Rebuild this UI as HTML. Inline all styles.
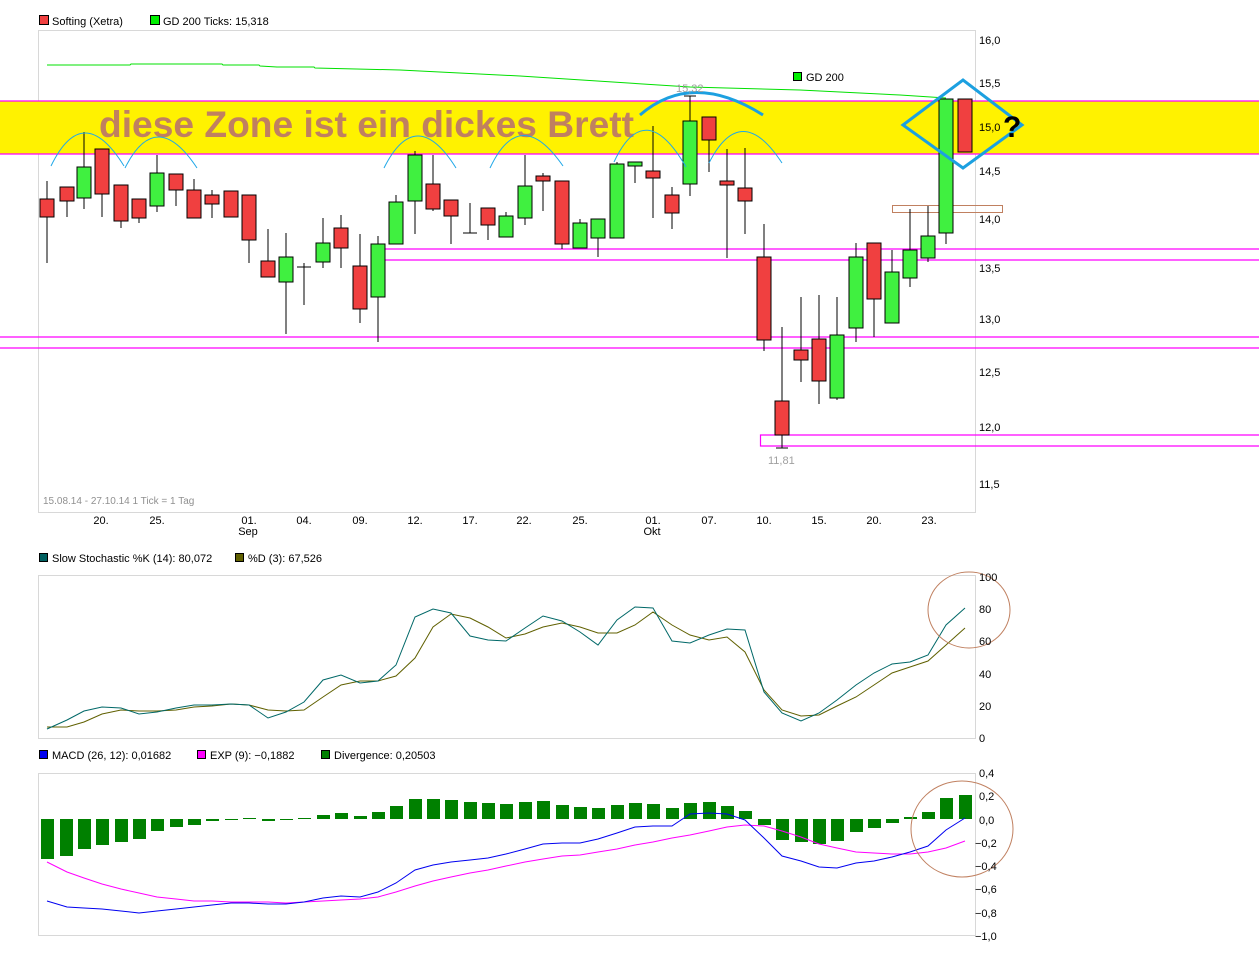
<!DOCTYPE html>
<html><head><meta charset="utf-8"><style>
html,body{margin:0;padding:0;background:#fff;}
svg{display:block;font-family:"Liberation Sans",Arial,sans-serif;}
</style></head><body>
<svg width="1259" height="979" viewBox="0 0 1259 979" xmlns="http://www.w3.org/2000/svg">
<!-- legend top -->
<rect x="39.5" y="15.5" width="9" height="9" fill="#f04040" stroke="#000"/>
<text x="52" y="25" font-size="11">Softing (Xetra)</text>
<rect x="150.5" y="15.5" width="9" height="9" fill="#00f000" stroke="#000"/>
<text x="163" y="25" font-size="11">GD 200 Ticks: 15,318</text>

<!-- main frame -->
<rect x="38.5" y="30.5" width="937" height="482" fill="#fff" stroke="#d8d8d8"/>
<rect x="0" y="101" width="1259" height="53" fill="#fff200"/>
<g stroke="#ff00ff" stroke-width="1.2" fill="none">
<line x1="0" y1="101" x2="1259" y2="101"/>
<line x1="0" y1="154" x2="1259" y2="154"/>
<line x1="0" y1="337" x2="1259" y2="337"/>
<line x1="0" y1="348" x2="1259" y2="348"/>
<path d="M1259 249 H375.5 V260 H1259"/>
<path d="M1259 435 H760.5 V446 H1259"/>
</g>
<rect x="892.5" y="205.5" width="110" height="7" fill="none" stroke="#c08060"/>

<!-- GD200 line -->
<polyline points="47,65 130,65 131,64 222,64 223,65 259,65 260,66 277,67 314,67 315,68 400,70 520,76 690,87 800,90 900,95 946,98" fill="none" stroke="#00e000" stroke-width="1"/>
<rect x="793.5" y="72.5" width="8" height="8" fill="#00f000" stroke="#000"/>
<text x="806" y="81" font-size="11">GD 200</text>

<!-- big text -->
<text x="99" y="137" font-size="37" font-weight="bold" fill="#c08060" textLength="535" lengthAdjust="spacingAndGlyphs">diese Zone ist ein dickes Brett</text>

<!-- candles -->
<g stroke="#000" stroke-width="1">
<line x1="47" y1="181" x2="47" y2="263"/><rect x="40" y="199" width="14" height="18" fill="#f04040"/>
<line x1="67" y1="187" x2="67" y2="217"/><rect x="60" y="187" width="14" height="14" fill="#f04040"/>
<line x1="84" y1="132" x2="84" y2="209"/><rect x="77" y="167" width="14" height="31" fill="#40f040"/>
<line x1="102" y1="149" x2="102" y2="217"/><rect x="95" y="149" width="14" height="45" fill="#f04040"/>
<line x1="121" y1="185" x2="121" y2="228"/><rect x="114" y="185" width="14" height="36" fill="#f04040"/>
<line x1="139" y1="199" x2="139" y2="223"/><rect x="132" y="199" width="14" height="19" fill="#f04040"/>
<line x1="157" y1="155" x2="157" y2="212"/><rect x="150" y="173" width="14" height="33" fill="#40f040"/>
<line x1="176" y1="174" x2="176" y2="206"/><rect x="169" y="174" width="14" height="16" fill="#f04040"/>
<line x1="194" y1="179" x2="194" y2="218"/><rect x="187" y="190" width="14" height="28" fill="#f04040"/>
<line x1="212" y1="190" x2="212" y2="218"/><rect x="205" y="195" width="14" height="9" fill="#f04040"/>
<line x1="231" y1="191" x2="231" y2="217"/><rect x="224" y="191" width="14" height="26" fill="#f04040"/>
<line x1="249" y1="195" x2="249" y2="263"/><rect x="242" y="195" width="14" height="45" fill="#f04040"/>
<line x1="268" y1="229" x2="268" y2="277"/><rect x="261" y="261" width="14" height="16" fill="#f04040"/>
<line x1="286" y1="233" x2="286" y2="334"/><rect x="279" y="257" width="14" height="25" fill="#40f040"/>
<line x1="304" y1="263" x2="304" y2="305"/><line x1="297" y1="267" x2="311" y2="267"/>
<line x1="323" y1="218" x2="323" y2="268"/><rect x="316" y="243" width="14" height="19" fill="#40f040"/>
<line x1="341" y1="215" x2="341" y2="268"/><rect x="334" y="228" width="14" height="20" fill="#f04040"/>
<line x1="360" y1="234" x2="360" y2="323"/><rect x="353" y="266" width="14" height="43" fill="#f04040"/>
<line x1="378" y1="236" x2="378" y2="342"/><rect x="371" y="244" width="14" height="53" fill="#40f040"/>
<line x1="396" y1="195" x2="396" y2="244"/><rect x="389" y="202" width="14" height="42" fill="#40f040"/>
<line x1="415" y1="151" x2="415" y2="234"/><rect x="408" y="155" width="14" height="46" fill="#40f040"/>
<line x1="433" y1="155" x2="433" y2="211"/><rect x="426" y="184" width="14" height="25" fill="#f04040"/>
<line x1="451" y1="200" x2="451" y2="244"/><rect x="444" y="200" width="14" height="16" fill="#f04040"/>
<line x1="470" y1="203" x2="470" y2="233"/><line x1="463" y1="233" x2="477" y2="233"/>
<line x1="488" y1="208" x2="488" y2="240"/><rect x="481" y="208" width="14" height="17" fill="#f04040"/>
<line x1="506" y1="212" x2="506" y2="237"/><rect x="499" y="216" width="14" height="21" fill="#40f040"/>
<line x1="525" y1="155" x2="525" y2="225"/><rect x="518" y="186" width="14" height="32" fill="#40f040"/>
<line x1="543" y1="173" x2="543" y2="211"/><rect x="536" y="176" width="14" height="5" fill="#f04040"/>
<line x1="562" y1="181" x2="562" y2="249"/><rect x="555" y="181" width="14" height="63" fill="#f04040"/>
<line x1="580" y1="219" x2="580" y2="248"/><rect x="573" y="223" width="14" height="25" fill="#40f040"/>
<line x1="598" y1="219" x2="598" y2="257"/><rect x="591" y="219" width="14" height="19" fill="#40f040"/>
<line x1="617" y1="162" x2="617" y2="238"/><rect x="610" y="164" width="14" height="74" fill="#40f040"/>
<line x1="635" y1="162" x2="635" y2="183"/><rect x="628" y="162" width="14" height="4" fill="#40f040"/>
<line x1="653" y1="126" x2="653" y2="218"/><rect x="646" y="171" width="14" height="7" fill="#f04040"/>
<line x1="672" y1="187" x2="672" y2="229"/><rect x="665" y="195" width="14" height="18" fill="#f04040"/>
<line x1="690" y1="96" x2="690" y2="196"/><line x1="684" y1="96" x2="696" y2="96"/><rect x="683" y="121" width="14" height="63" fill="#40f040"/>
<line x1="709" y1="117" x2="709" y2="172"/><rect x="702" y="117" width="14" height="23" fill="#f04040"/>
<line x1="727" y1="149" x2="727" y2="258"/><rect x="720" y="181" width="14" height="4" fill="#f04040"/>
<line x1="745" y1="148" x2="745" y2="234"/><rect x="738" y="188" width="14" height="13" fill="#f04040"/>
<line x1="764" y1="224" x2="764" y2="351"/><rect x="757" y="257" width="14" height="83" fill="#f04040"/>
<line x1="782" y1="327" x2="782" y2="448"/><line x1="776" y1="448" x2="788" y2="448"/><rect x="775" y="401" width="14" height="34" fill="#f04040"/>
<line x1="801" y1="297" x2="801" y2="382"/><rect x="794" y="350" width="14" height="10" fill="#f04040"/>
<line x1="819" y1="295" x2="819" y2="404"/><rect x="812" y="339" width="14" height="42" fill="#f04040"/>
<line x1="837" y1="297" x2="837" y2="400"/><rect x="830" y="335" width="14" height="63" fill="#40f040"/>
<line x1="856" y1="243" x2="856" y2="342"/><rect x="849" y="257" width="14" height="71" fill="#40f040"/>
<line x1="874" y1="243" x2="874" y2="337"/><rect x="867" y="243" width="14" height="56" fill="#f04040"/>
<line x1="892" y1="250" x2="892" y2="323"/><rect x="885" y="272" width="14" height="51" fill="#40f040"/>
<line x1="910" y1="209" x2="910" y2="287"/><rect x="903" y="250" width="14" height="28" fill="#40f040"/>
<line x1="928" y1="206" x2="928" y2="262"/><rect x="921" y="236" width="14" height="22" fill="#40f040"/>
<line x1="946" y1="99" x2="946" y2="244"/><rect x="939" y="99" width="14" height="134" fill="#40f040"/>
<rect x="958" y="99" width="14" height="53" fill="#f04040"/>
</g>

<!-- thin blue arcs -->
<g fill="none" stroke="#20a8e8" stroke-width="1">
<path d="M51 166 Q83 100 124 166"/>
<path d="M125 168 Q156 106 197 168"/>
<path d="M384 168 Q416 104 456 168"/>
<path d="M490 168 Q520 104 563 166"/>
<path d="M614 162 Q645 96 686 167"/>
<path d="M709 163 Q741 100 782 163"/>
</g>
<!-- thick arc & diamond -->
<path d="M640 115 Q692 70 763 115" fill="none" stroke="#1ca0e0" stroke-width="3"/>
<polygon points="903,125 963,80 1022,125 963,168" fill="none" stroke="#1ca0e0" stroke-width="3"/>
<text x="1003" y="137" font-size="30" font-weight="bold" fill="#000">?</text>
<text x="676" y="92" font-size="11" fill="#a0a0a0">15,32</text>
<text x="768" y="464" font-size="11" fill="#a0a0a0">11,81</text>
<text x="43" y="504" font-size="10" fill="#909090">15.08.14 - 27.10.14   1 Tick = 1 Tag</text>

<!-- price axis -->
<g font-size="11" fill="#000">
<text x="979" y="44">16,0</text><text x="979" y="87">15,5</text><text x="979" y="131">15,0</text>
<text x="979" y="175">14,5</text><text x="979" y="223">14,0</text><text x="979" y="272">13,5</text>
<text x="979" y="323">13,0</text><text x="979" y="376">12,5</text><text x="979" y="431">12,0</text>
<text x="979" y="488">11,5</text>
</g>
<!-- date axis -->
<g font-size="11" fill="#000" text-anchor="middle">
<text x="101" y="524">20.</text><text x="157" y="524">25.</text><text x="249" y="524">01.</text>
<text x="248" y="535">Sep</text><text x="304" y="524">04.</text><text x="360" y="524">09.</text>
<text x="415" y="524">12.</text><text x="470" y="524">17.</text><text x="524" y="524">22.</text>
<text x="580" y="524">25.</text><text x="653" y="524">01.</text><text x="652" y="535">Okt</text>
<text x="709" y="524">07.</text><text x="764" y="524">10.</text><text x="819" y="524">15.</text>
<text x="874" y="524">20.</text><text x="929" y="524">23.</text>
</g>

<!-- stochastic -->
<rect x="39.5" y="553.5" width="8" height="8" fill="#006060" stroke="#000"/>
<text x="52" y="562" font-size="11">Slow Stochastic %K (14): 80,072</text>
<rect x="235.5" y="553.5" width="8" height="8" fill="#606000" stroke="#000"/>
<text x="248" y="562" font-size="11">%D (3): 67,526</text>
<rect x="38.5" y="575.5" width="937" height="163" fill="#fff" stroke="#d8d8d8"/>
<polyline fill="none" stroke="#606000" stroke-width="1" points="47,727 67,727 84,722 102,714 121,710 139,711 157,711 176,710 194,707 212,706 231,704 249,705 268,710 286,711 304,710 323,697 341,685 360,681 378,681 396,676 415,658 433,627 451,614 470,618 488,627 506,638 525,634 543,627 562,623 580,627 598,633 617,633 635,625 653,612 672,625 690,635 709,640 727,637 745,652 764,690 782,710 801,716 819,715 837,706 856,697 874,685 892,673 910,667 928,661 946,645 965,628"/>
<polyline fill="none" stroke="#006868" stroke-width="1" points="47,729 67,720 84,711 102,707 121,708 139,714 157,712 176,708 194,705 212,705 231,704 249,705 268,718 286,712 304,702 323,680 341,675 360,683 378,681 396,665 415,617 433,609 451,613 470,636 488,640 506,641 525,628 543,616 562,621 580,632 598,645 617,620 635,607 653,608 672,641 690,643 709,635 727,629 745,630 764,692 782,713 801,721 819,713 837,700 856,685 874,673 892,664 910,662 928,655 946,625 965,608"/>
<ellipse cx="969" cy="610" rx="41" ry="38" fill="none" stroke="#c08060" stroke-width="1"/>
<g font-size="11" fill="#000">
<text x="979" y="581">100</text><text x="979" y="613">80</text><text x="979" y="645">60</text>
<text x="979" y="678">40</text><text x="979" y="710">20</text><text x="979" y="742">0</text>
</g>

<!-- MACD -->
<rect x="39.5" y="750.5" width="8" height="8" fill="#0000f0" stroke="#000"/>
<text x="52" y="759" font-size="11">MACD (26, 12): 0,01682</text>
<rect x="197.5" y="750.5" width="8" height="8" fill="#ff00ff" stroke="#000"/>
<text x="210" y="759" font-size="11">EXP (9): −0,1882</text>
<rect x="321.5" y="750.5" width="8" height="8" fill="#008000" stroke="#000"/>
<text x="334" y="759" font-size="11">Divergence: 0,20503</text>
<rect x="38.5" y="773.5" width="937" height="162" fill="#fff" stroke="#d8d8d8"/>
<g fill="#008000">
<rect x="41" y="819" width="13" height="40"/><rect x="60" y="819" width="13" height="37"/>
<rect x="78" y="819" width="13" height="30"/><rect x="96" y="819" width="13" height="26"/>
<rect x="115" y="819" width="13" height="23"/><rect x="133" y="819" width="13" height="20"/>
<rect x="151" y="819" width="13" height="12"/><rect x="170" y="819" width="13" height="8"/>
<rect x="188" y="819" width="13" height="6"/><rect x="206" y="819" width="13" height="2"/>
<rect x="225" y="819" width="13" height="1"/><rect x="243" y="818" width="13" height="1"/>
<rect x="262" y="819" width="13" height="2"/><rect x="280" y="819" width="13" height="1"/>
<rect x="298" y="818" width="13" height="1"/><rect x="317" y="815" width="13" height="4"/>
<rect x="335" y="813" width="13" height="6"/><rect x="354" y="816" width="13" height="3"/>
<rect x="372" y="812" width="13" height="7"/><rect x="390" y="806" width="13" height="13"/>
<rect x="409" y="799" width="13" height="20"/><rect x="427" y="799" width="13" height="20"/>
<rect x="445" y="800" width="13" height="19"/><rect x="464" y="802" width="13" height="17"/>
<rect x="482" y="803" width="13" height="16"/><rect x="500" y="804" width="13" height="15"/>
<rect x="519" y="802" width="13" height="17"/><rect x="537" y="801" width="13" height="18"/>
<rect x="556" y="805" width="13" height="14"/><rect x="574" y="807" width="13" height="12"/>
<rect x="592" y="808" width="13" height="11"/><rect x="611" y="805" width="13" height="14"/>
<rect x="629" y="803" width="13" height="16"/><rect x="647" y="804" width="13" height="15"/>
<rect x="666" y="808" width="13" height="11"/><rect x="684" y="803" width="13" height="16"/>
<rect x="703" y="802" width="13" height="17"/><rect x="721" y="806" width="13" height="13"/>
<rect x="739" y="811" width="13" height="8"/><rect x="758" y="819" width="13" height="6"/>
<rect x="776" y="819" width="13" height="21"/><rect x="795" y="819" width="13" height="23"/>
<rect x="813" y="819" width="13" height="25"/><rect x="831" y="819" width="13" height="22"/>
<rect x="850" y="819" width="13" height="13"/><rect x="868" y="819" width="13" height="9"/>
<rect x="886" y="819" width="13" height="4"/><rect x="904" y="817" width="13" height="2"/>
<rect x="922" y="812" width="13" height="7"/><rect x="940" y="798" width="13" height="21"/>
<rect x="959" y="795" width="13" height="24"/>
</g>
<polyline fill="none" stroke="#ff00ff" stroke-width="1" points="47,862 67,872 84,878 102,884 121,889 139,893 157,897 176,899 194,901 212,901 231,902 249,902 268,902 286,903 304,902 323,901 341,900 360,899 378,897 396,892 415,886 433,881 451,877 470,873 488,870 506,866 525,862 543,859 562,856 580,855 598,852 617,849 635,845 653,842 672,838 690,835 709,831 727,827 745,825 764,826 782,831 801,837 819,844 837,848 856,852 874,853 892,854 910,854 928,852 946,848 965,841"/>
<polyline fill="none" stroke="#0000f0" stroke-width="1" points="47,901 67,907 84,908 102,909 121,911 139,913 157,911 176,909 194,907 212,905 231,903 249,903 268,904 286,904 304,902 323,898 341,896 360,897 378,892 396,883 415,870 433,865 451,862 470,860 488,858 506,854 525,849 543,844 562,843 580,843 598,839 617,833 635,827 653,826 672,826 690,814 709,813 727,814 745,820 764,838 782,856 801,861 819,867 837,868 856,863 874,861 892,857 910,852 928,846 946,830 965,818"/>
<ellipse cx="962" cy="829" rx="51" ry="48" fill="none" stroke="#c08060" stroke-width="1"/>
<g font-size="11" fill="#000">
<text x="979" y="777">0,4</text><text x="979" y="800">0,2</text><text x="979" y="824">0,0</text>
<text x="975" y="847">−0,2</text><text x="975" y="870">−0,4</text><text x="975" y="893">−0,6</text>
<text x="975" y="917">−0,8</text><text x="975" y="940">−1,0</text>
</g>
</svg>
</body></html>
